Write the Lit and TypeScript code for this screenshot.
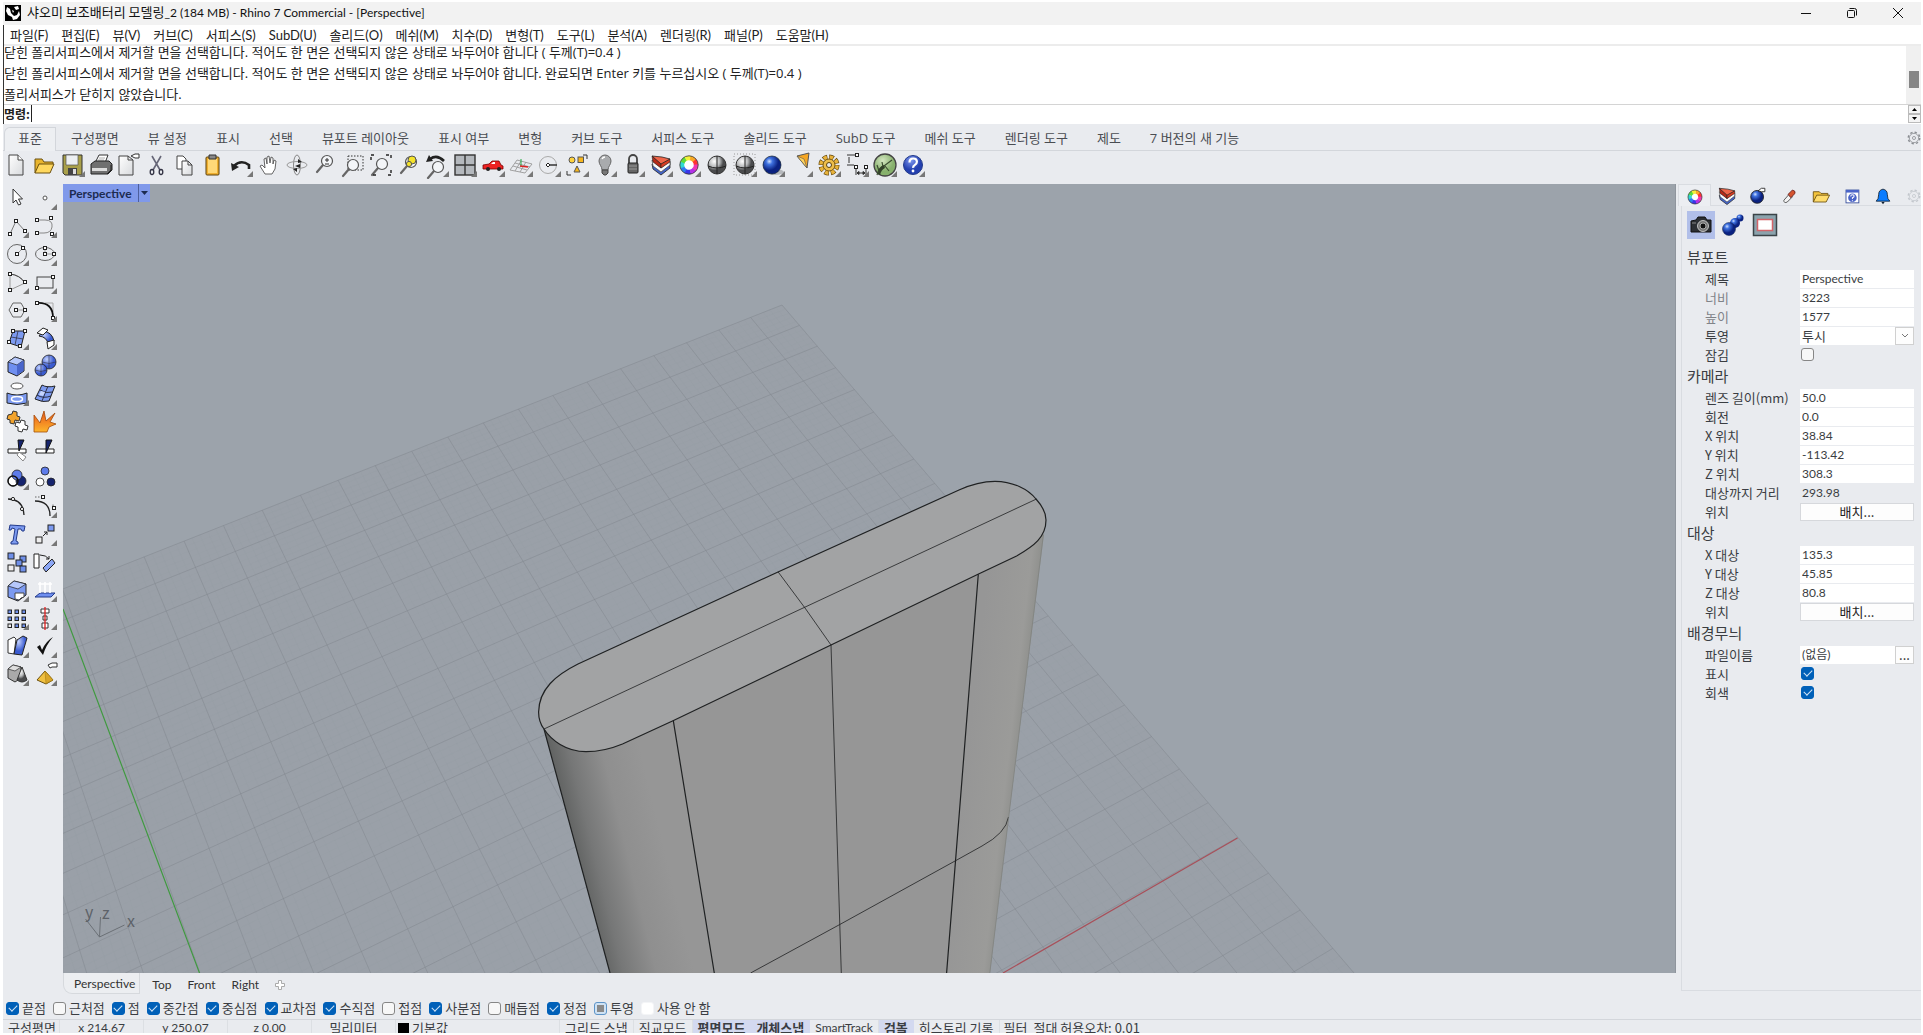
import { LitElement, html, svg, css, nothing } from "lit";
import { customElement } from "lit/decorators.js";
import { classMap } from "lit/directives/class-map.js";

const menus = ["파일(F)", "편집(E)", "뷰(V)", "커브(C)", "서피스(S)", "SubD(U)", "솔리드(O)", "메쉬(M)", "치수(D)", "변형(T)", "도구(L)", "분석(A)", "렌더링(R)", "패널(P)", "도움말(H)"];
const history = [
  "닫힌 폴리서피스에서 제거할 면을 선택합니다. 적어도 한 면은 선택되지 않은 상태로 놔두어야 합니다 ( 두께(T)=0.4 )",
  "닫힌 폴리서피스에서 제거할 면을 선택합니다. 적어도 한 면은 선택되지 않은 상태로 놔두어야 합니다. 완료되면 Enter 키를 누르십시오 ( 두께(T)=0.4 )",
  "폴리서피스가 닫히지 않았습니다.",
];
const toolTabs = ["표준", "구성평면", "뷰 설정", "표시", "선택", "뷰포트 레이아웃", "표시 여부", "변형", "커브 도구", "서피스 도구", "솔리드 도구", "SubD 도구", "메쉬 도구", "렌더링 도구", "제도", "7 버전의 새 기능"];

/* Small square control-point marker used by many of the curve icons. */
const pt = (x: number, y: number) => svg`<rect x=${x - 1.5} y=${y - 1.5} width="3" height="3" fill="#fff" stroke="#222"/>`;
const sphere = (x: number, y: number, r: number, fill: string) => svg`<circle cx=${x} cy=${y} r=${r} fill=${fill} stroke="#222" stroke-width=".8"/>`;
const lens = (x: number, y: number) => svg`<path d="M${x - 4} ${y + 4}l-6 7" stroke="#666" stroke-width="2.2" stroke-linecap="round"/><circle cx=${x} cy=${y} r="5.5" fill="#f3f5f8" stroke="#555" stroke-width="1.2"/>`;
const layers = svg`<path d="M5 13l9 5 9-7v6l-9 7-8-6z" fill="#4465c8" stroke="#222" stroke-width=".8"/><path d="M5 9l9 8 9-7v4l-9 7-8-6z" fill="#fafafa" stroke="#444" stroke-width=".7"/><path d="M5 5l9 7v5l-8-6z" fill="#b52a18" stroke="#222" stroke-width=".6"/><path d="M14 12l9-4v3l-9 6z" fill="#d63c22" stroke="#222" stroke-width=".6"/><path d="M5 5l10 1 8 2-9 5z" fill="#f0664a" stroke="#222" stroke-width=".8"/>`;
const folder = svg`<path d="M5 21V9h7l2 2h8v3" fill="#f3c33c" stroke="#6b5010"/><path d="M5 21l4-8h15l-4 8z" fill="#ffdc6c" stroke="#6b5010"/>`;
const wheel = (r: number) => {
  const cs = ["#f33", "#f9a825", "#f4f13a", "#5ddc3a", "#2fd9d0", "#2d7df0", "#3a35e8", "#b531e8", "#f035b0"];
  return svg`<circle cx="14" cy="14" r=${r} fill="#fff"/>${cs.map((c, i) => {
    const a = (i / 9) * 6.2832, b = ((i + 1.1) / 9) * 6.2832;
    return svg`<path d="M${14 + r * Math.cos(a)} ${14 - r * Math.sin(a)}A${r} ${r} 0 0 0 ${14 + r * Math.cos(b)} ${14 - r * Math.sin(b)}" fill="none" stroke=${c} stroke-width="4.4"/>`;
  })}<circle cx="14" cy="14" r=${r + 2.2} fill="none" stroke="#333" stroke-width=".8"/>`;
};
const shaded = svg`<circle cx="14" cy="14" r="9" fill="url(#gray)" stroke="#333"/><path d="M5 15q9 4 18 0M14 5v18" fill="none" stroke="#222"/>`;
const gear = (c: string) => svg`<circle cx="14" cy="14" r="6" fill="none" stroke=${c} stroke-width="1"/><circle cx="14" cy="14" r="7.4" fill="none" stroke=${c} stroke-width="1.8" stroke-dasharray="3 2.8"/><circle cx="14" cy="14" r="2" fill="none" stroke=${c}/>`;
const box = (x: number, y: number, f = "#6f8fe8") => svg`<rect x=${x} y=${y} width="6" height="6" fill=${f} stroke="#222"/>`;

const topTools: [string, unknown, boolean][] = [
  ["새로 만들기", svg`<path d="M6 4h9l5 5v15H6z" fill="url(#paper)" stroke="#444"/><path d="M15 4v5h5" fill="#fff" stroke="#444"/>`, false],
  ["열기", svg`<path d="M4 22V8h7l2 3h9v3" fill="#e9b52e" stroke="#6b5010"/><path d="M4 22l4-9h15l-4 9z" fill="#ffd85e" stroke="#6b5010"/>`, false],
  ["저장", svg`<path d="M4 4h19v20H6l-2-2z" fill="#a9a04a" stroke="#333"/><path d="M7 4h12v10H7z" fill="#eceff2" stroke="#555" stroke-width=".7"/><path d="M9 17h9v7H9z" fill="#444"/><path d="M14 18h3v5h-3z" fill="#ddd"/>`, true],
  ["인쇄", svg`<path d="M8 12l4-8h9l-3 8z" fill="#fff" stroke="#333"/><path d="M12 7h6M11 9h6" stroke="#999" stroke-width=".8"/><path d="M4 13l4-3h14l3 3v6l-4 4H4z" fill="#707070" stroke="#222"/><path d="M5 17h15v3H5z" fill="#ddd"/><path d="M20 23l4-4v-5" fill="none" stroke="#222"/>`, false],
  ["문서 속성", svg`<path d="M4 5h9l5 4v15H4z" fill="url(#paper)" stroke="#444"/><path d="M13 5v4h5" fill="none" stroke="#444"/><path d="M16 5l4-2h4v4h-4l-2-1z" fill="#fff" stroke="#333"/>`, false],
  ["자르기", svg`<path d="M9 5l8 14M18 5l-8 14" stroke="#667" stroke-width="1.6"/><ellipse cx="9" cy="21" rx="1.800" ry="2.500" fill="none" stroke="#334" stroke-width="1.300"/><ellipse cx="18" cy="21" rx="1.800" ry="2.500" fill="none" stroke="#334" stroke-width="1.300"/>`, false],
  ["복사", svg`<path d="M6 5h6l3 3v10H6z" fill="#fff" stroke="#444"/><path d="M11 10h6l4 4v10H11z" fill="url(#paper)" stroke="#444"/><path d="M17 10v4h4" fill="none" stroke="#444"/>`, false],
  ["붙여넣기", svg`<rect x="7" y="6" width="13" height="18" rx="1" fill="#f0b030" stroke="#5c430c"/><path d="M9 8h9v14H9z" fill="#ffd978"/><path d="M10 4h7v4h-7z" fill="#888" stroke="#333"/>`, false],
  ["실행 취소", svg`<path d="M7 15Q14 8 22 14v4" fill="none" stroke="#222" stroke-width="2.600"/><path d="M4 12l1 8 7-4z" fill="#222"/>`, true],
  ["이동", svg`<path d="M10 23l-5-8 2-1 3 3-1-9 2-1 1 6V6l2-1 1 7 1-6 2 1v6l1-4 2 1-1 8-3 5z" fill="#fff" stroke="#555" stroke-width=".9"/>`, false],
  ["회전", svg`<ellipse cx="14" cy="14" rx="3.5" ry="10" fill="none" stroke="#888"/><ellipse cx="14" cy="14" rx="10" ry="3.5" fill="none" stroke="#999"/><path d="M12 15l5-2v4zM15 8l4 3-4 1zM10 18l4-1v4z" fill="#222"/>`, false],
  ["줌", svg`${lens(16, 10)}<path d="M14 9h4M16 7v4M14 13h4" stroke="#333"/>`, false],
  ["창 줌", svg`<rect x="9" y="5" width="15" height="14" fill="none" stroke="#333" stroke-dasharray="1.5 1.5"/>${lens(14, 14)}`, false],
  ["전체 줌", svg`${lens(15, 13)}<path d="M4 9V4h5M19 4h5v5M24 19v5h-5M9 24H4" fill="none" stroke="#222" stroke-width="1.4" stroke-dasharray="3 2"/>`, false],
  ["선택 줌", svg`${lens(16, 11)}<circle cx="17" cy="9" r="4" fill="#f4e22a" stroke="#555"/><circle cx="14" cy="13" r="2.6" fill="#f4e22a" stroke="#555"/>`, false],
  ["뷰 취소", svg`${lens(15, 16)}<path d="M7 8q7-5 14 2" fill="none" stroke="#222" stroke-width="2.600"/><path d="M3 11l3-7 4 6z" fill="#222"/>`, true],
  ["4 뷰", svg`<rect x="4" y="4" width="20" height="20" fill="#b4b8bd" stroke="#333" stroke-width="1.400"/><path d="M14 4v20M4 14h20" stroke="#333" stroke-width="1.400"/>`, true],
  ["차량", svg`<path d="M4 18v-4l6-1 3-3h7l2 4 2 1v3z" fill="#e22" stroke="#700" stroke-width=".8"/><path d="M12 13l2-2h2v2z" fill="#fff"/><circle cx="9" cy="18" r="2" fill="#222"/><circle cx="20" cy="18" r="2" fill="#222"/>`, true],
  ["구성평면", svg`<path d="M3 19l7-10 15 4-7 9zM6 15l14 4M8 12l15 4M8 20l6-10M13 21l6-10" fill="none" stroke="#999" stroke-width=".9"/><path d="M14 16V8" stroke="#2a4"/><path d="M13 15l8 1" stroke="#d22" stroke-width="1.5"/>`, true],
  ["원", svg`<circle cx="13" cy="14" r="8.5" fill="none" stroke="#aaa"/><path d="M13 14h9" stroke="#333" stroke-width="1.5"/><path d="M11 14l2-2 2 2-2 2z" fill="#fff" stroke="#222"/>`, true],
  ["선택", svg`<path d="M20 4h4v4M4 20v4h4" fill="none" stroke="#333"/><circle cx="9" cy="9" r="3" fill="#ffd23c" stroke="#555"/><rect x="15" y="6" width="5.500" height="5.500" fill="#f6b51c" stroke="#555"/><path d="M14 15l3 6h-6z" fill="#f6b51c" stroke="#555"/>`, true],
  ["숨기기", svg`<path d="M8 10a6 6 0 0112 0c0 4-3 5-3 9h-6c0-4-3-5-3-9z" fill="#a9abad" stroke="#666"/><path d="M11 8q1-2 3-2" stroke="#fff" stroke-width="1.500"/><path d="M11 19h6v3l-2 2h-2l-2-2z" fill="#777" stroke="#444"/>`, true],
  ["잠금", svg`<path d="M10 13V8a4 4 0 018 0v5" fill="none" stroke="#444" stroke-width="1.800"/><rect x="9" y="12" width="10" height="10" rx="1" fill="#666" stroke="#222"/><path d="M10 15h8M10 18h8" stroke="#999"/>`, true],
  ["레이어", layers, true],
  ["객체 속성", wheel(7), true],
  ["음영 처리", shaded, false],
  ["렌더링 모드", svg`<path d="M3 3h21v21H3z" fill="none" stroke="#999" stroke-dasharray="1 2"/>${shaded}`, true],
  ["렌더링", svg`<ellipse cx="16" cy="21" rx="9" ry="3" fill="#b5b8bc"/><circle cx="13" cy="14" r="9" fill="url(#blue)" stroke="#123" stroke-width=".7"/>`, true],
  ["조명", svg`<path d="M10 5l12-3-2 15z" fill="#f5a623" stroke="#555"/><path d="M10 5l7 3 3 9z" fill="#ffd45e" stroke="#555" stroke-width=".6"/>`, true],
  ["옵션", svg`<circle cx="14" cy="14" r="8" fill="none" stroke="#5c430c" stroke-width="5" stroke-dasharray="4.400 1.883"/><circle cx="14" cy="14" r="8" fill="none" stroke="#e8b23a" stroke-width="3.800" stroke-dasharray="3.400 2.883" stroke-dashoffset="-.5"/><circle cx="14" cy="14" r="6" fill="#edbd4a" stroke="#7a5a14"/><circle cx="14" cy="14" r="2.500" fill="#e9ebef" stroke="#5c430c"/>`, true],
  ["치수", svg`<path d="M4 4h11M4 14h7M6 6v6M13 15v9M23 15v9M14 22h8M14 22l2-1.500v3zM22 22l-2-1.500v3z" fill="#222" stroke="#333"/>${pt(14, 4)}${pt(13, 16)}${pt(23, 16)}`, true],
  ["Grasshopper", svg`<circle cx="14" cy="14" r="11" fill="url(#green)" stroke="#444" stroke-width="1.300"/><path d="M6 24q2-8 7-9l8-6M8 20l-2-6M12 16l-1-5M14 15l4 5" fill="none" stroke="#3a4d30" stroke-width="1.200"/><path d="M7 23q0-7 6-9l1 3q-4 2-5 7z" fill="#33442a"/>`, true],
  ["도움말", svg`<circle cx="14" cy="14" r="9.500" fill="url(#help)" stroke="#223a8a"/><path d="M10.500 11.500q0-4 3.700-4t3.700 3.200q0 2-2 3.200t-1.800 3" fill="none" stroke="#fff" stroke-width="2.200"/><circle cx="14" cy="20" r="1.400" fill="#fff"/>`, true],
];

const sideTools: [string, unknown, boolean][] = [
  ["선택", svg`<path d="M10 5v14l3-3 2.500 5 2.500-1-2.500-5h4z" fill="#fff" stroke="#333"/>`, false],
  ["점", svg`<circle cx="14" cy="14" r="2" fill="#fff" stroke="#555"/>`, true],
  ["폴리라인", svg`<path d="M7 22l6-13 9 10" fill="none" stroke="#777"/>${pt(7, 22)}${pt(13, 9)}${pt(22, 19)}`, true],
  ["곡선", svg`<path d="M6 8h8q8 0 7 7-1 6-8 6H6" fill="none" stroke="#888"/>${pt(6, 8)}${pt(6, 21)}${pt(20, 6)}${pt(21, 22)}`, true],
  ["원", svg`<circle cx="14" cy="14" r="9.500" fill="none" stroke="#666"/><path d="M14 14l6-6" stroke="#999"/>${pt(14, 14)}${pt(20, 8)}`, true],
  ["타원", svg`<ellipse cx="14" cy="14" rx="9.500" ry="6.500" fill="none" stroke="#666"/><path d="M14 8v6h9" fill="none" stroke="#999"/>${pt(14, 14)}${pt(14, 8)}${pt(23, 14)}`, true],
  ["호", svg`<path d="M7 22V6q10 1 15 9z" fill="none" stroke="#999"/><path d="M7 6q10 1 15 9" fill="none" stroke="#444"/>${pt(7, 6)}${pt(7, 22)}${pt(22, 14)}`, true],
  ["사각형", svg`<rect x="6" y="9" width="16" height="11" fill="none" stroke="#444"/>${pt(22, 9)}${pt(6, 20)}`, true],
  ["다각형", svg`<path d="M6 14l4-7h8l4 7-4 7h-8z" fill="none" stroke="#666"/><path d="M13 14h9" stroke="#999"/>${pt(13, 14)}${pt(22, 14)}`, true],
  ["필릿", svg`<path d="M14 7h8v9" fill="none" stroke="#aaa"/><path d="M6 7q16-1 16 15" fill="none" stroke="#111" stroke-width="1.800"/>${pt(6, 7)}${pt(22, 22)}`, true],
  ["서피스", svg`<path d="M10 7h12l-4 16L6 19z" fill="#7c9af0" stroke="#222"/><path d="M15 7l-3 14M8 13l12 2" stroke="#334" stroke-width=".8"/>${pt(10, 7)}${pt(22, 7)}${pt(6, 18)}${pt(17, 22)}`, true],
  ["로프트", svg`<path d="M12 7q9 1 11 10l-6 3q-1-7-9-8z" fill="url(#blue2)" stroke="#222"/><path d="M6 9l6-5 5 2-5 5z" fill="#fff" stroke="#222"/><path d="M16 18l7-2v5l-6 4z" fill="#fff" stroke="#222"/>`, true],
  ["상자", svg`<path d="M5 10l7-5 9 3v11l-7 5-9-4z" fill="#6f8ff0" stroke="#222"/><path d="M5 10l9 3 7-5-9-3z" fill="#b6c8fb" stroke="#222" stroke-width=".7"/><path d="M14 13v10.500l6.500-5V8.500z" fill="#4a66cc"/>`, true],
  ["부울", svg`${sphere(18, 10, 7, "url(#blue2)")}${sphere(10, 18, 6, "url(#blue2)")}<path d="M4 18q6 3 12 0M11 10q7 3 14 0M10 12v12M18 3v14" fill="none" stroke="#334" stroke-width=".6"/>`, true],
  ["돌출", svg`<ellipse cx="14" cy="6" rx="6" ry="3" fill="#fff" stroke="#555"/><path d="M4 13q10 4 20 0v10q-10 3-20 0z" fill="#7c9af0" stroke="#222"/><ellipse cx="14" cy="19" rx="5.500" ry="2.500" fill="#7c9af0" stroke="#fff" stroke-width="1.500"/>`, true],
  ["메쉬", svg`<path d="M11 5q5 3 13 1l-6 15q-6 2-14-2z" fill="#7c9af0" stroke="#222"/><path d="M17 6l-6 15M9 10q6 4 13 2M6 15q6 4 14 1" fill="none" stroke="#223" stroke-width=".9"/><path d="M10 11l4 1-2 4-4-1z" fill="#c6d4fc"/>`, true],
  ["결합", svg`<path d="M5 7l4-1 1-3 4 1 0 4 3 1-1 4-4-1-1 4-4-1 0-3-3-1z" fill="#f2a32c" stroke="#333"/><path d="M13 14l4 1 1-3 4 1 0 4 3 1-1 4-4-1-1 3-4-1 0-4-3-1z" fill="#fff" stroke="#333"/>`, false],
  ["분해", svg`<path d="M3 7l6 8 4-12 2 10 9-8-5 9 6 2-7 3-2 5H3z" fill="url(#fire)" stroke="#a24b0a" stroke-width=".8"/>`, false],
  ["트림", svg`<path d="M5 13h18v4H5z" fill="#fff" stroke="#222"/><path d="M16 16l7 5-3 4-6-6z" fill="#fff" stroke="#888"/><path d="M15 4h6l-5 11z" fill="#16246e" stroke="#111"/>`, false],
  ["분할", svg`<path d="M5 13h18v4H5z" fill="#fff" stroke="#222"/><path d="M15 4h6l-6 13z" fill="#16246e" stroke="#111"/>`, false],
  ["그룹", svg`${sphere(10, 17, 5, "#fff")}${sphere(18, 17, 5, "#16246e")}${sphere(14, 11, 5, "#5d7bea")}<circle cx="10" cy="17" r="5" fill="none" stroke="#111" stroke-width="1.400"/>`, true],
  ["그룹 해제", svg`${sphere(14, 7, 4, "#5d7bea")}${sphere(9, 18, 4, "#fff")}${sphere(20, 18, 4, "#16246e")}`, false],
  ["점 켜기", svg`<path d="M5 7q15 0 16 16" fill="none" stroke="#222" stroke-width="1.300"/><circle cx="10" cy="7" r="1.600" fill="#fff" stroke="#222"/><circle cx="19" cy="17" r="1.600" fill="#fff" stroke="#222"/>`, false],
  ["편집점", svg`<path d="M4 9q15 0 15 15" fill="none" stroke="#222" stroke-width="1.300"/><path d="M4 5h7M22 14v-3" stroke="#666" stroke-dasharray="1.500 1.500"/>${pt(12, 5)}${pt(23, 16)}`, true],
  ["문자", svg`<path d="M7 5l15 1-1 5h-2l-1-2h-3l-2 12 2 1v2H8v-2l2-1 2-12-3-1-1 2H6z" fill="#7c9af0" stroke="#223a8a"/>`, false],
  ["이동", svg`<rect x="5" y="17" width="6" height="6" fill="#eee" stroke="#222"/><rect x="17" y="5" width="6" height="6" fill="#7c9af0" stroke="#222"/><path d="M12 16l4-4M13 12h3v3" fill="none" stroke="#222"/>`, true],
  ["복사", svg`${box(5, 5)}${box(17, 8)}${box(13, 12)}${box(5, 17, "#eee")}${box(17, 18)}`, false],
  ["변환", svg`<path d="M3 6h5v14H3z" fill="#fff" stroke="#222"/><path d="M12 20l9-9 3 4-9 9z" fill="#8ba6f4" stroke="#222"/><path d="M9 7q6 0 9 4M18 8v3h-3" fill="none" stroke="#222"/>`, false],
  ["쉘", svg`<path d="M5 10l6-5 12 3v11l-8 6-10-4z" fill="#7c9af0" stroke="#222"/><path d="M5 10l10 3 8-5-12-3z" fill="#b6c8fb" stroke="#222" stroke-width=".7"/><path d="M12 17h9v4l-3 1-2 2-4-1z" fill="#fff" stroke="#444"/>`, true],
  ["투영", svg`<path d="M4 21l5-4h15l-4 4z" fill="#6f8ff0" stroke="#223a8a"/><path d="M9 6v11M14 6v11M19 6v11M7 8h14" stroke="#fff" stroke-width="1.600"/>`, true],
  ["배열", svg`${[5, 12, 19].map((x) => [6, 13, 20].map((y) => svg`<rect x=${x} y=${y} width="3.500" height="3.500" fill=${x === 5 && y === 20 ? "#eee" : "#6f8fe8"} stroke="#222"/>`))}`, true],
  ["정렬", svg`<path d="M10 5h8v4h-8zM12 12h4v4h-4zM11 19h6v5h-6z" fill="#fff" stroke="#333"/><path d="M14 3v23" stroke="#e02020" stroke-width="1.300"/>`, true],
  ["굽힘", svg`<path d="M5 8l6-3 2 2-2 15-6-1z" fill="#fff" stroke="#333"/><path d="M14 8l6-4 4 2-5 17-8-1z" fill="url(#blue2)" stroke="#222"/>`, true],
  ["확인", svg`<path d="M6 15l3-2 2 5Q15 9 22 5q-7 8-10 18z" fill="#111"/>`, true],
  ["솔리드", svg`<path d="M5 9l5-4 8 2v11l-6 4-7-4z" fill="#aaa" stroke="#333"/><path d="M5 9l7 2 6-4-8-2z" fill="#ddd" stroke="#333" stroke-width=".7"/><path d="M19 7l5 13q-5 4-10 0z" fill="url(#gray)" stroke="#333"/>`, true],
  ["히스토리", svg`<path d="M6 20l8-9 8 9-7 4z" fill="#f0c040" stroke="#6b5010"/><path d="M14 11l1 12.500L22 20z" fill="#d9a528" stroke="#a57d14" stroke-width=".6"/><path d="M17 5l4-2h5v4h-5l-2 1z" fill="#fff" stroke="#333"/>`, true],
];

const panelTabs: [string, unknown][] = [
  ["속성", wheel(6)],
  ["레이어", layers],
  ["렌더링", svg`<circle cx="13" cy="15" r="7.500" fill="url(#blue)" stroke="#222"/><path d="M14 8l4-3h4v4h-4z" fill="#fff" stroke="#222"/>`],
  ["재질", svg`<path d="M8 19l7-8 3 4-6 6q-4 2-4-2z" fill="#f3f3f3" stroke="#444"/><path d="M13 12l5-5q4 1 3 4l-5 5z" fill="#d5542f" stroke="#622"/>`],
  ["라이브러리", folder],
  ["도움말", svg`<rect x="7" y="7" width="15" height="15" fill="#fff" stroke="#334a9a"/><path d="M7 7h15v3H7z" fill="#4a64c8"/><circle cx="14.500" cy="16" r="5" fill="#4a64c8"/><path d="M12.500 14.500q0-2 2-2t2 1.500-2 2v1.500M14.500 19v1" fill="none" stroke="#fff" stroke-width="1.200"/>`],
  ["알림", svg`<path d="M6 20q3-2 3-8 0-5 5-6 5 1 5 6 0 6 3 8z" fill="#0a7cff" stroke="#123"/><path d="M12 21h4l-2 2.500z" fill="#123"/>`],
];

type Row = { label: string; kind: "text" | "plain" | "select" | "check" | "button" | "file"; value?: string; on?: boolean; muted?: boolean };
const sections: { title: string; rows: Row[] }[] = [
  { title: "뷰포트", rows: [
    { label: "제목", kind: "text", value: "Perspective" },
    { label: "너비", kind: "text", value: "3223", muted: true },
    { label: "높이", kind: "text", value: "1577", muted: true },
    { label: "투영", kind: "select", value: "투시" },
    { label: "잠김", kind: "check" }] },
  { title: "카메라", rows: [
    { label: "렌즈 길이(mm)", kind: "text", value: "50.0" },
    { label: "회전", kind: "text", value: "0.0" },
    { label: "X 위치", kind: "text", value: "38.84" },
    { label: "Y 위치", kind: "text", value: "-113.42" },
    { label: "Z 위치", kind: "text", value: "308.3" },
    { label: "대상까지 거리", kind: "plain", value: "293.98" },
    { label: "위치", kind: "button", value: "배치..." }] },
  { title: "대상", rows: [
    { label: "X 대상", kind: "text", value: "135.3" },
    { label: "Y 대상", kind: "text", value: "45.85" },
    { label: "Z 대상", kind: "text", value: "80.8" },
    { label: "위치", kind: "button", value: "배치..." }] },
  { title: "배경무늬", rows: [
    { label: "파일이름", kind: "file", value: "(없음)" },
    { label: "표시", kind: "check", on: true },
    { label: "회색", kind: "check", on: true }] },
];

const snaps: [string, string][] = [["끝점", "on"], ["근처점", ""], ["점", "on"], ["중간점", "on"], ["중심점", "on"], ["교차점", "on"], ["수직점", "on"], ["접점", ""], ["사분점", "on"], ["매듭점", ""], ["정점", "on"], ["투영", "mixed"], ["사용 안 함", "faint"]];
const status: [string, string][] = [["구성평면", "c57"], ["x 214.67", "c84 mid latin"], ["y 250.07", "c84 mid latin"], ["z 0.00", "c84 mid latin"], ["밀리미터", "c84 mid"], ["기본값", "c164 swatch"], ["그리드 스냅", ""], ["직교모드", ""], ["평면모드", "active"], ["개체스냅", "active"], ["SmartTrack", "latin"], ["검볼", "active"], ["히스토리 기록", ""], ["필터", "flat"], ["절대 허용오차: 0.01", "flat"]];

/* Ground-plane projection: u and v count major grid cells from the far corner. */
const project = (u: number, v: number) => {
  const w = 1 - 0.00663 * u - 0.0122 * v;
  return [(782 - 36.39 * u + 7.69 * v) / w - 63, (305 + 10.3 * u + 16.4 * v) / w - 184];
};
const gridPath = (step: number, skip: number) => {
  let d = "";
  for (let i = 0; i <= 40 / step; i++) {
    if (skip && i % skip === 0) continue;
    const t = i * step;
    const ends = [project(t, 0), project(t, 40), project(0, t), project(40, t)].map((p) => p.map((n) => n.toFixed(1)).join(" "));
    d += `M${ends[0]}L${ends[1]}M${ends[2]}L${ends[3]}`;
  }
  return d;
};
const ground = [project(0, 0), project(40, 0), project(40, 40), project(0, 40)].map((p) => p.join(",")).join(" ");
const rim = "M481 545Q475.600 538 475.600 528C476 505 493 491 515 480L715 388L896 306C910 299.500 921 297.300 932 297.300C950 297.500 965 305 973 315Q983 326 983 336C983 353 971 362 953.600 372L915 390.300L768 461L610 536.700L559.500 560Q541 567.700 523 567.700C503 567.500 488 556 481 545Z";

@customElement("app-root")
export class AppRoot extends LitElement {
  static styles = css`
    :host { display: block; --chrome: #e9ebef; --line: #d3d6db; --ink: #3a3d42; font: 13px/18px "Noto Sans CJK KR", "Noto Sans", sans-serif; color: #222; background: #fff; }
    * { box-sizing: border-box; }
    button, input, select { font: inherit; color: inherit; margin: 0; padding: 0; border: 0; background: none; border-radius: 0; outline: 0; }
    svg { display: block; }
    .latin, .row .value, .row .plain { font-family: Lato, "Noto Sans CJK KR", sans-serif; font-size: 12px; }
    .window { display: flex; flex-direction: column; height: 100vh; padding: 2px 2px 2px 3px; }
    .title { display: flex; align-items: center; height: 23px; background: #f2f2f2; padding: 0 0 2px 2px; flex: none; color: #111; }
    .title h1 { font: inherit; margin: 0 0 0 6px; flex: 1; }
    .title button { width: 46px; height: 21px; display: grid; place-items: center; }
    .console { border-left: 1px solid #333; flex: none; }
    .menu { display: flex; height: 21px; gap: 13px; padding-left: 6px; border-bottom: 2px solid #ececec; align-items: center; font-family: Lato, "Noto Sans CJK KR", sans-serif; }
    .menu button { line-height: 18px; color: #222; }
    .history { display: flex; height: 59px; border-bottom: 1px solid #d4d4d4; font-family: "Open Sans", "Noto Sans CJK KR", sans-serif; }
    .lines { flex: 1; display: flex; flex-direction: column; justify-content: flex-end; margin-bottom: -1px; }
    .lines p { margin: 0; line-height: 21px; white-space: nowrap; }
    .scroll { width: 15px; background: #f0f0f0; padding: 25px 2px 0 3px; }
    .thumb { height: 17px; background: #858585; }
    .command { display: flex; height: 19px; align-items: flex-start; }
    .command label { font-weight: 700; font-size: 12px; line-height: 18px; padding-right: 1px; }
    .command input { flex: 1; height: 17px; border-left: 1px solid #222; }
    .spin { display: flex; flex-direction: column; width: 13px; }
    .spin button { height: 9px; border: 1px solid #bbb; background: #f4f4f4; display: grid; place-items: center; }
    .tabs { display: flex; height: 27px; flex: none; background: var(--chrome); border-bottom: 1px solid var(--line); padding: 3px 0 0 1px; color: #4a4d52; font-family: "Open Sans", "Noto Sans CJK KR", sans-serif; }
    .tabs button { padding: 0 14px 0 15px; white-space: nowrap; height: 21px; line-height: 20px; }
    .tabs .current { border: 1px solid var(--line); border-bottom: 0; height: 24px; background: #edeff2; padding: 0 13px 3px; border-top-left-radius: 6px; }
    .tabs .end { margin-left: auto; padding: 0; }
    .tools { display: flex; flex: none; height: 33px; background: var(--chrome); align-items: flex-start; }
    .tool { width: 28px; height: 28px; flex: none; }
    .main { display: flex; flex: 1; min-height: 0; background: var(--chrome); }
    .side { display: grid; grid-template-columns: 28px 28px; grid-auto-rows: 28px; align-content: start; width: 60px; flex: none; }
    .center { flex: 1; display: flex; flex-direction: column; min-width: 0; }
    .viewport { position: relative; flex: 1; min-height: 0; overflow: hidden; background: #9ca3ab; border-right: 1px solid #8f959d; }
    .viewport > svg { width: 100%; height: 100%; }
    .badge { position: absolute; left: 0; top: 0; display: flex; height: 18px; background: #8099ea; color: #1d2b50; font-weight: 700; }
    .badge button { padding: 0 6px; line-height: 17px; font-weight: 700; }
    .badge .drop { width: 12px; padding: 0; border-left: 1px solid #4d5f9c; display: grid; place-items: center; }
    .axis { font-size: 16px; fill: #5d6268; }
    .viewtabs { display: flex; height: 24px; flex: none; color: #333; }
    .viewtabs button { height: 21px; padding: 2px 8px 0; }
    .viewtabs .current { border: 1px solid #d6d9dd; border-top: 0; padding: 2px 4px 0 10px; margin-right: 4px; border-bottom-left-radius: 9px; background: #eceef1; }
    .panel { width: 245px; flex: none; display: flex; flex-direction: column; padding-left: 2px; color: var(--ink); }
    .ptabs { display: flex; height: 22px; border-bottom: 1px solid #d9dce1; }
    .ptabs button { flex: 1 1 0; display: grid; place-items: center; height: 22px; min-width: 0; }
    .ptabs .current { border: 1px solid #d9dce1; border-bottom: 0; background: #eceef2; }
    .ptabs .gear { flex: 0 0 22px; justify-items: end; padding-top: 2px; }
    .pbody { flex: 1; border-left: 1px solid #d9dce1; border-bottom: 1px solid #d9dce1; margin-left: 3px; padding: 5px 7px 0 5px; margin-bottom: 6px; }
    .modes { display: flex; gap: 4px; margin-bottom: 6px; }
    .modes button { width: 28px; height: 28px; }
    .modes .current { background: #b1bfe9; }
    .pbody h2 { font: 15px/24px "Noto Sans CJK KR", sans-serif; margin: 0; }
    .row { display: grid; grid-template-columns: 1fr 114px; height: 19px; align-items: center; padding-left: 18px; }
    .row label { line-height: 18px; white-space: nowrap; }
    .muted { color: #808388; }
    .row .value { height: 18px; background: #fff; padding: 0 2px; width: 100%; min-width: 0; }
    .row .plain { padding: 0 2px; line-height: 18px; }
    .combo { display: flex; height: 18px; min-width: 0; }
    .combo .value { appearance: none; flex: 1; width: 0; }
    .combo select.value { font-size: 13px; }
    .combo .more { width: 19px; height: 18px; background: #fdfdfd; border: 1px solid #d0d0d0; display: grid; place-items: center; line-height: 12px; color: #222; }
    .push { height: 18px; background: #fdfdfd; border: 1px solid #d6d8dc; line-height: 15px; color: #222; }
    .box { appearance: none; width: 13px; height: 13px; flex: none; background: #f7f7f7; border: 1px solid #868686; border-radius: 3px; display: grid; place-items: center; }
    .row .box { margin-left: 1px; }
    .box:checked { background: #0060b8; border-color: #0060b8; }
    .box:checked::before { content: ""; width: 7px; height: 4px; border: solid #cfe3f6; border-width: 0 0 1px 1px; transform: rotate(-45deg) translate(1px, -1px); }
    .box:indeterminate { background: #cfe2f4; border-color: #5d94c8; }
    .box:indeterminate::before { content: ""; width: 7px; height: 7px; background: #8a8a8a; }
    .box.faint { border-color: #f4f5f7; background: #fff; }
    .snaps { display: flex; gap: 7px; height: 22px; flex: none; align-items: center; padding-left: 3px; background: var(--chrome); color: var(--ink); }
    .snaps label { display: flex; gap: 3px; align-items: center; }
    .status { display: flex; flex: none; height: 14px; overflow: hidden; background: var(--chrome); border-top: 1px solid var(--line); color: var(--ink); }
    .status button { height: 16px; line-height: 16px; padding: 0 5px; border-right: 1px solid #dcdfe3; white-space: nowrap; flex: none; }
    .status .c57 { width: 57px; }
    .status .c84 { width: 84px; }
    .status .c164 { width: 164px; }
    .status .mid { text-align: center; }
    .status .swatch { display: flex; gap: 3px; padding: 0 2px; align-items: center; }
    .status i { width: 11px; height: 11px; background: #000; }
    .status .active { background: #d3d9f0; font-weight: 700; border-right-color: #d3d9f0; }
    .status .flat { border: 0; padding: 0 2px 0 4px; }
  `;

  private icon(shape: unknown, flyout = false, size = 28, view = "0 0 28 28") {
    return html`<svg width=${size} height=${size} viewBox=${view} fill="none" aria-hidden="true">${shape}${flyout ? svg`<path d="M26 20v6h-6z" fill="#777"/>` : nothing}</svg>`;
  }

  private field(r: Row, id: string) {
    switch (r.kind) {
      case "text": return html`<input class="value" id=${id} .value=${r.value ?? ""} ?readonly=${r.muted}>`;
      case "plain": return html`<output class="plain" id=${id}>${r.value}</output>`;
      case "check": return html`<input class="box" type="checkbox" id=${id} .checked=${!!r.on}>`;
      case "button": return html`<button class="push" id=${id}>${r.value}</button>`;
      case "select": return html`<div class="combo"><select class="value" id=${id}><option>${r.value}</option></select><span class="more"><svg width="8" height="5" fill="none" stroke="#777"><path d="M1 1l3 3 3-3"/></svg></span></div>`;
      case "file": return html`<div class="combo"><input class="value" id=${id} .value=${r.value ?? ""}><button class="more" aria-label="찾아보기">...</button></div>`;
    }
  }

  private scene() {
    return html`<svg viewBox="0 0 1612 789" preserveAspectRatio="xMinYMin slice" role="img" aria-label="Perspective">
      <defs>
        <radialGradient id="gray" cx=".35" cy=".3"><stop offset="0" stop-color="#fff"/><stop offset=".6" stop-color="#b9bbbd"/><stop offset="1" stop-color="#4a4b4d"/></radialGradient>
        <radialGradient id="blue" cx=".35" cy=".3"><stop offset="0" stop-color="#cfe0ff"/><stop offset=".35" stop-color="#3f72e0"/><stop offset="1" stop-color="#0a2180"/></radialGradient>
        <radialGradient id="blue2" cx=".35" cy=".3"><stop offset="0" stop-color="#c3d2ff"/><stop offset="1" stop-color="#3a5bd0"/></radialGradient>
        <radialGradient id="help" cx=".4" cy=".25"><stop offset="0" stop-color="#7f98f0"/><stop offset="1" stop-color="#2440b0"/></radialGradient>
        <radialGradient id="green" cx=".4" cy=".3"><stop offset="0" stop-color="#d3e6c0"/><stop offset="1" stop-color="#86b06c"/></radialGradient>
        <linearGradient id="fire" x2="0" y2="1"><stop offset="0" stop-color="#e8541a"/><stop offset="1" stop-color="#fdb52c"/></linearGradient>
        <linearGradient id="paper" x2="1" y2="1"><stop offset="0" stop-color="#fff"/><stop offset="1" stop-color="#d8dadd"/></linearGradient>
        <linearGradient id="left" gradientUnits="userSpaceOnUse" x1="500" y1="640" x2="590" y2="618"><stop offset="0" stop-color="#5c5e5d"/><stop offset=".25" stop-color="#767777"/><stop offset=".6" stop-color="#8f8f8f"/><stop offset="1" stop-color="#969696"/></linearGradient>
        <linearGradient id="right" gradientUnits="userSpaceOnUse" x1="900" y1="600" x2="952" y2="606"><stop offset="0" stop-color="#969696"/><stop offset=".8" stop-color="#9b9b99"/><stop offset="1" stop-color="#8f908d"/></linearGradient>
      </defs>
      <polygon points=${ground} fill="#9aa0a8"/>
      <path d=${gridPath(0.2, 5)} stroke="#8e949c" stroke-opacity=".06" fill="none"/>
      <path d=${gridPath(1, 0)} stroke="#82888f" stroke-opacity=".68" fill="none" stroke-width=".8"/>
      <path d="M0 425L136.500 789" stroke="#3f9a3f" stroke-width="1.200"/>
      <path d="M940 789L1174.500 654" stroke="#a8505a" stroke-width="1.200"/>
      <path d="M481 545L547 789H927L980.400 350L768 461L559 560z" fill="#969696"/>
      <path d="M481 545L547 789H651L610 536L559 560L523 568z" fill="url(#left)"/>
      <path d="M915 390L884 789H927L946 631L981 350L953 372z" fill="url(#right)"/>
      <path d=${rim} fill="#a2a3a4" stroke="#1f2122" stroke-width="1.200"/>
      <g fill="none" stroke="#1f2122">
        <path d="M481 545L547 789M610.300 536.700L651.300 789M915.300 390.300L883.600 789" stroke-width="1.200"/>
        <path d="M481 545L973.500 315M715.200 388L742 424L768 461L778.300 789M687.600 789L776.800 740.500L892.400 676.800L919 662Q943 649 945.500 633" stroke-width=".8"/>
        <path d="M980.400 350.700L945.900 631.400L926.800 789" stroke="#7b7d7b" stroke-width=".6"/>
      </g>
      <path d="M22.500 735L36.500 753L61.500 741M36.500 753L37.500 733" fill="none" stroke="#6b7076"/>
      <g class="axis"><text x="22" y="734">y</text><text x="39" y="735">z</text><text x="64" y="743">x</text></g>
    </svg>`;
  }

  render() {
    return html`<div class="window">
      <header class="title">
        <svg width="16" height="16" viewBox="0 0 16 16"><path d="M0 0h16v16H0z" fill="#000"/><path d="M2 2l3 2 1 4 3 3 3-1 2-4 1 4-3 4-4 1-1-3-4-2-2-4zM9 2l4-1 1 3-3 1zM7 5l2 1-1 2z" fill="#fff"/></svg>
        <h1>샤오미 보조배터리 모델링<span class="latin">_2 (184 MB) - Rhino 7 Commercial - [Perspective]</span></h1>
        <button aria-label="최소화"><svg width="12" height="12"><path d="M1 6.500h10" stroke="#111"/></svg></button>
        <button aria-label="이전 크기로"><svg width="12" height="12" fill="none" stroke="#111"><rect x="1.500" y="3.500" width="7" height="7" rx="1"/><path d="M3.500 1.500h5q2 0 2 2v5"/></svg></button>
        <button aria-label="닫기"><svg width="12" height="12"><path d="M1 1l10 10M11 1L1 11" stroke="#111"/></svg></button>
      </header>
      <div class="console">
        <nav class="menu">${menus.map((m) => html`<button>${m}</button>`)}</nav>
        <div class="history"><div class="lines">${history.map((l) => html`<p>${l}</p>`)}</div><div class="scroll"><div class="thumb"></div></div></div>
        <div class="command"><label for="cmd">명령:</label><input id="cmd">
          <div class="spin"><button aria-label="위로"><svg width="5" height="3"><path d="M0 3L2.500 0 5 3z"/></svg></button><button aria-label="아래로"><svg width="5" height="3"><path d="M0 0h5L2.500 3z"/></svg></button></div></div>
      </div>
      <nav class="tabs">${toolTabs.map((t, i) => html`<button class=${classMap({ current: i === 0 })}>${t}</button>`)}<button class="end" aria-label="탭 설정">${this.icon(gear("#8a8d92"), false, 14, "5 5 18 18")}</button></nav>
      <div class="tools">${topTools.map(([n, s, f]) => html`<button class="tool" aria-label=${n}>${this.icon(s, f)}</button>`)}</div>
      <main class="main">
        <div class="side">${sideTools.map(([n, s, f]) => html`<button class="tool" aria-label=${n}>${this.icon(s, f)}</button>`)}</div>
        <section class="center">
          <div class="viewport">${this.scene()}
            <div class="badge"><button class="latin">Perspective</button><button class="drop" aria-label="뷰포트 메뉴"><svg width="7" height="4"><path d="M0 0h7L3.500 4z" fill="#1d2b50"/></svg></button></div>
          </div>
          <nav class="viewtabs latin"><button class="current">Perspective</button><button>Top</button><button>Front</button><button>Right</button><button aria-label="뷰포트 추가"><svg width="10" height="10" fill="#fff" stroke="#aaa"><path d="M3.500 .5h3v3h3v3h-3v3h-3v-3h-3v-3h3z"/></svg></button></nav>
        </section>
        <aside class="panel">
          <nav class="ptabs">${panelTabs.map(([n, s], i) => html`<button class=${classMap({ current: i === 0 })} aria-label=${n}>${this.icon(s, false, 24)}</button>`)}<button class="gear" aria-label="패널 설정">${this.icon(gear("#c3c7cd"), false, 14, "5 5 18 18")}</button></nav>
          <div class="pbody">
            <div class="modes">
              <button class="current" aria-label="뷰포트">${this.icon(svg`<path d="M4 10l5-1 2-3h7l2 3h4v12H4z" fill="#2c2f33" stroke="#111"/><circle cx="16" cy="15" r="5.500" fill="#777" stroke="#ddd" stroke-width=".8"/><circle cx="16" cy="15" r="3" fill="#111" stroke="#aaa"/><path d="M5 12h4" stroke="#888"/>`)}</button>
              <button aria-label="재질">${this.icon(svg`<circle cx="21" cy="7" r="3.500" fill="url(#blue)"/><circle cx="16" cy="12" r="5" fill="url(#blue)"/><circle cx="10" cy="18" r="6.500" fill="url(#blue)" stroke="#124" stroke-width=".5"/>`)}</button>
              <button aria-label="배경">${this.icon(svg`<rect x="2.500" y="3.500" width="23" height="21" fill="#8ba3ad" stroke="#3b4347" stroke-width="1.500"/><rect x="6.500" y="8.500" width="15" height="11" fill="#fff" stroke="#d2646a" stroke-width="1.500"/>`)}</button>
            </div>
            ${sections.map((s, i) => html`<section><h2>${s.title}</h2>${s.rows.map((r, j) => html`<div class="row"><label class=${classMap({ muted: !!r.muted })} for=${`f${i}-${j}`}>${r.label}</label>${this.field(r, `f${i}-${j}`)}</div>`)}</section>`)}
          </div>
        </aside>
      </main>
      <div class="snaps">${snaps.map(([n, k]) => html`<label><input type="checkbox" class=${classMap({ box: true, faint: k === "faint" })} .checked=${k === "on"} .indeterminate=${k === "mixed"}>${n}</label>`)}</div>
      <footer class="status">${status.map(([n, c]) => html`<button class=${c}>${c.includes("swatch") ? html`<i></i>` : nothing}${n}</button>`)}</footer>
    </div>`;
  }
}
